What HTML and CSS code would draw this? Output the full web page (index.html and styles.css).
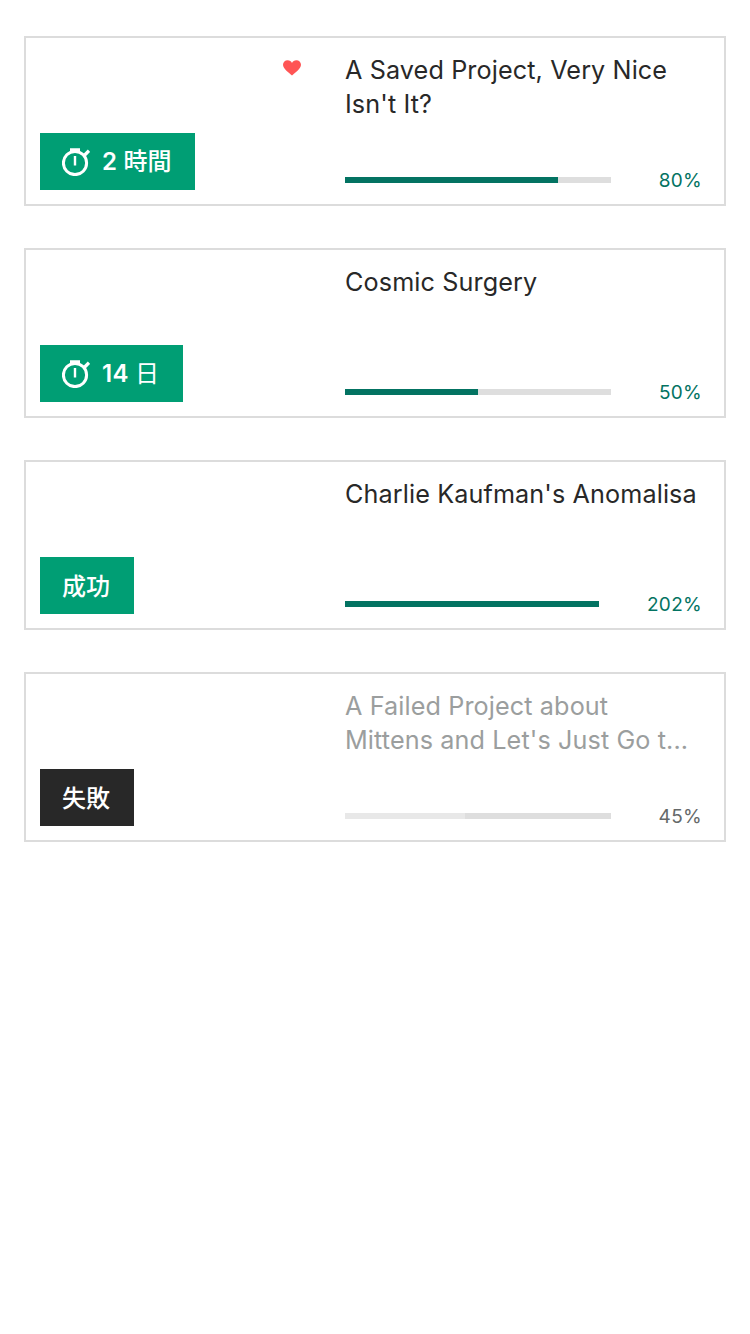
FILE: index.html
```html
<!DOCTYPE html>
<html lang="ja">
<head>
<meta charset="utf-8">
<title>Projects</title>
<link rel="stylesheet" href="styles.css">
</head>
<body>
<svg width="0" height="0" class="sprite" aria-hidden="true">
  <symbol id="timer" viewBox="0 0 28 28">
    <circle cx="13" cy="15" r="11.6" fill="none" stroke="#fff" stroke-width="3"/>
    <path d="M8 .2h10v3.300H8zM11.800 8h2.400v9.600h-2.400z" fill="#fff"/>
    <path d="M22 7.700L27 2.700" stroke="#fff" stroke-width="3.400" fill="none"/>
  </symbol>
</svg>
<main class="list">
  <article class="card">
    <div class="media">
      <svg class="heart" viewBox="0 0 18 16"><path d="M9 15.5C6.2 13 0 9 0 4.8 0 2.2 2.1.3 4.6.3 6.6.3 8.2 1.3 9 2.9 9.8 1.3 11.4.3 13.4.3 15.9.3 18 2.2 18 4.8 18 9 11.8 13 9 15.5Z" fill="#ff5555"/></svg>
      <span class="badge"><svg class="timer"><use href="#timer"/></svg><span>2 <span class="cjk">時間</span></span></span>
    </div>
    <div class="info">
      <h2 class="title">A Saved Project, Very Nice Isn't It?</h2>
      <div class="funding"><div class="track"><div class="fill" style="width:80%"></div></div><span class="percent">80%</span></div>
    </div>
  </article>
  <article class="card">
    <div class="media">
      <span class="badge"><svg class="timer"><use href="#timer"/></svg><span>14 <span class="cjk cjk-light">日</span></span></span>
    </div>
    <div class="info">
      <h2 class="title">Cosmic Surgery</h2>
      <div class="funding"><div class="track"><div class="fill" style="width:50%"></div></div><span class="percent">50%</span></div>
    </div>
  </article>
  <article class="card">
    <div class="media"><span class="badge"><span class="cjk">成功</span></span></div>
    <div class="info">
      <h2 class="title">Charlie Kaufman's Anomalisa</h2>
      <div class="funding"><div class="track track-short"><div class="fill" style="width:100%"></div></div><span class="percent">202%</span></div>
    </div>
  </article>
  <article class="card failed">
    <div class="media"><span class="badge"><span class="cjk">失敗</span></span></div>
    <div class="info">
      <h2 class="title">A Failed Project about Mittens and Let's Just Go t...</h2>
      <div class="funding"><div class="track"><div class="fill" style="width:45%"></div></div><span class="percent">45%</span></div>
    </div>
  </article>
</main>
</body>
</html>
```
FILE: styles.css
```css
* { box-sizing: border-box; }
body {
  margin: 0;
  background: #fff;
  font-family: Inter, "Noto Sans CJK JP", sans-serif;
}
.sprite { position: absolute; }
.list {
  display: flex;
  flex-direction: column;
  gap: 42px;
  padding: 36px 24px;
}
.card {
  display: flex;
  height: 170px;
  border: 2px solid #dcdcdc;
  background: #fff;
}
.media {
  position: relative;
  display: flex;
  align-items: flex-end;
  width: 319px;
  padding: 14px;
}
.heart {
  position: absolute;
  left: 257px;
  top: 22px;
  width: 18px;
  height: 16px;
}
.badge {
  display: flex;
  align-items: center;
  height: 57px;
  padding: 0 23.8px 0 22px;
  background: #009e74;
  color: #fff;
  font-size: 24px;
  font-weight: 600;
  line-height: 55px;
  letter-spacing: .25px;
  white-space: pre;
}
.badge > span { padding-bottom: 2px; }
.badge > .cjk { padding-bottom: 3px; }
.cjk {
  font-family: "Noto Sans CJK JP", sans-serif;
  font-weight: 500;
  letter-spacing: 0;
}
.cjk-light { font-weight: 400; }
.timer {
  width: 28px;
  height: 28px;
  margin-right: 12px;
}
.info {
  display: flex;
  flex-direction: column;
  justify-content: space-between;
  flex: 1;
  padding: 15px 22px 13px 0;
}
.title {
  margin: 0;
  color: #282828;
  font-size: 25.2px;
  font-weight: 400;
  line-height: 34px;
  letter-spacing: .11px;
}
.funding {
  display: flex;
  align-items: center;
  justify-content: space-between;
  height: 22px;
}
.track {
  width: 266px;
  height: 6px;
  background: #dedede;
}
.track-short { width: 254px; }
.fill {
  height: 100%;
  background: #037362;
}
.percent {
  padding-top: 2px;
  color: #037362;
  font-size: 19px;
  line-height: 22px;
  letter-spacing: .3px;
}
.failed .badge { background: #282828; }
.failed .title { color: #9b9e9e; }
.failed .fill { background: #e8e8e8; }
.failed .percent { color: #656969; }
```
